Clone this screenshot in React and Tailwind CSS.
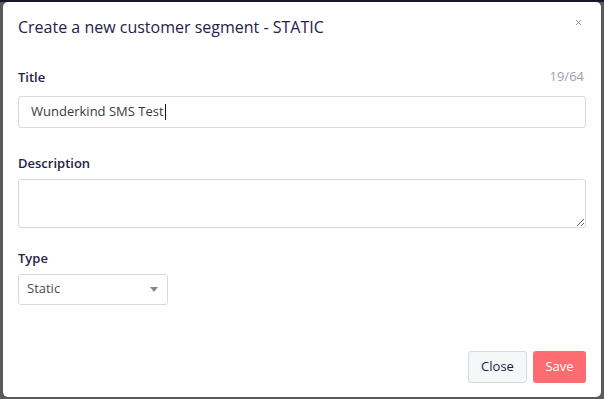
import { X } from "lucide-react";

const Label = ({ children }) => (
  <p className="text-[13px] font-semibold leading-[18px] text-[#24224a]">{children}</p>
);

const App = () => (
  <main
    className="h-[399px] w-[604px] overflow-hidden border-t-2 border-[#17162b] bg-[#5a5a5c] px-[3px]"
    style={{ fontFamily: '"Open Sans", "Liberation Sans", sans-serif' }}
  >
    <div className="relative h-[395px] w-[598px] rounded-[5px] bg-white px-[15px]">
      <div className="flex items-center justify-between pt-[14px]">
        <h1 className="text-[16px] font-medium leading-[22px] text-[#24224a]">
          Create a new customer segment - STATIC
        </h1>
        <button className="mr-[3px] -mt-[10px] text-[#8a8a8a]">
          <X className="h-[9px] w-[9px]" strokeWidth={2.5} />
        </button>
      </div>

      <div className="mt-[29px] flex items-center justify-between">
        <Label>Title</Label>
        <span className="mr-[2px] text-[13px] text-[#9d9db3]">19/64</span>
      </div>
      <div className="mt-[9px] flex h-[32px] items-center rounded-[3px] border border-[#d9d9d9] px-[12px] text-[13px] text-[#3a3a3a]">
        Wunderkind SMS Test
        <span className="ml-[1px] h-[16px] w-px bg-[#111]" />
      </div>

      <div className="mt-[26px]">
        <Label>Description</Label>
      </div>
      <textarea className="mt-[7px] block h-[49px] w-full rounded-[3px] border border-[#d9d9d9] outline-none" />

      <div className="mt-[21px]">
        <Label>Type</Label>
      </div>
      <div className="mt-[7px] flex h-[31px] w-[150px] items-center justify-between rounded-[3px] border border-[#d9d9d9] pl-[8px] pr-[9px] text-[13px] text-[#4a4a4a]">
        Static
        <span className="h-0 w-0 border-x-[4px] border-t-[5px] border-x-transparent border-t-[#888]" />
      </div>

      <div className="mt-[46px] flex justify-end gap-[6px]">
        <button className="h-[32px] w-[59px] rounded-[3px] border border-[#dadada] bg-[#f6f7f9] text-[13px] font-medium text-[#24224a]">
          Close
        </button>
        <button className="h-[32px] w-[53px] rounded-[3px] bg-[#fd6c70] text-[13px] text-white">
          Save
        </button>
      </div>
    </div>
  </main>
);

export default App;
